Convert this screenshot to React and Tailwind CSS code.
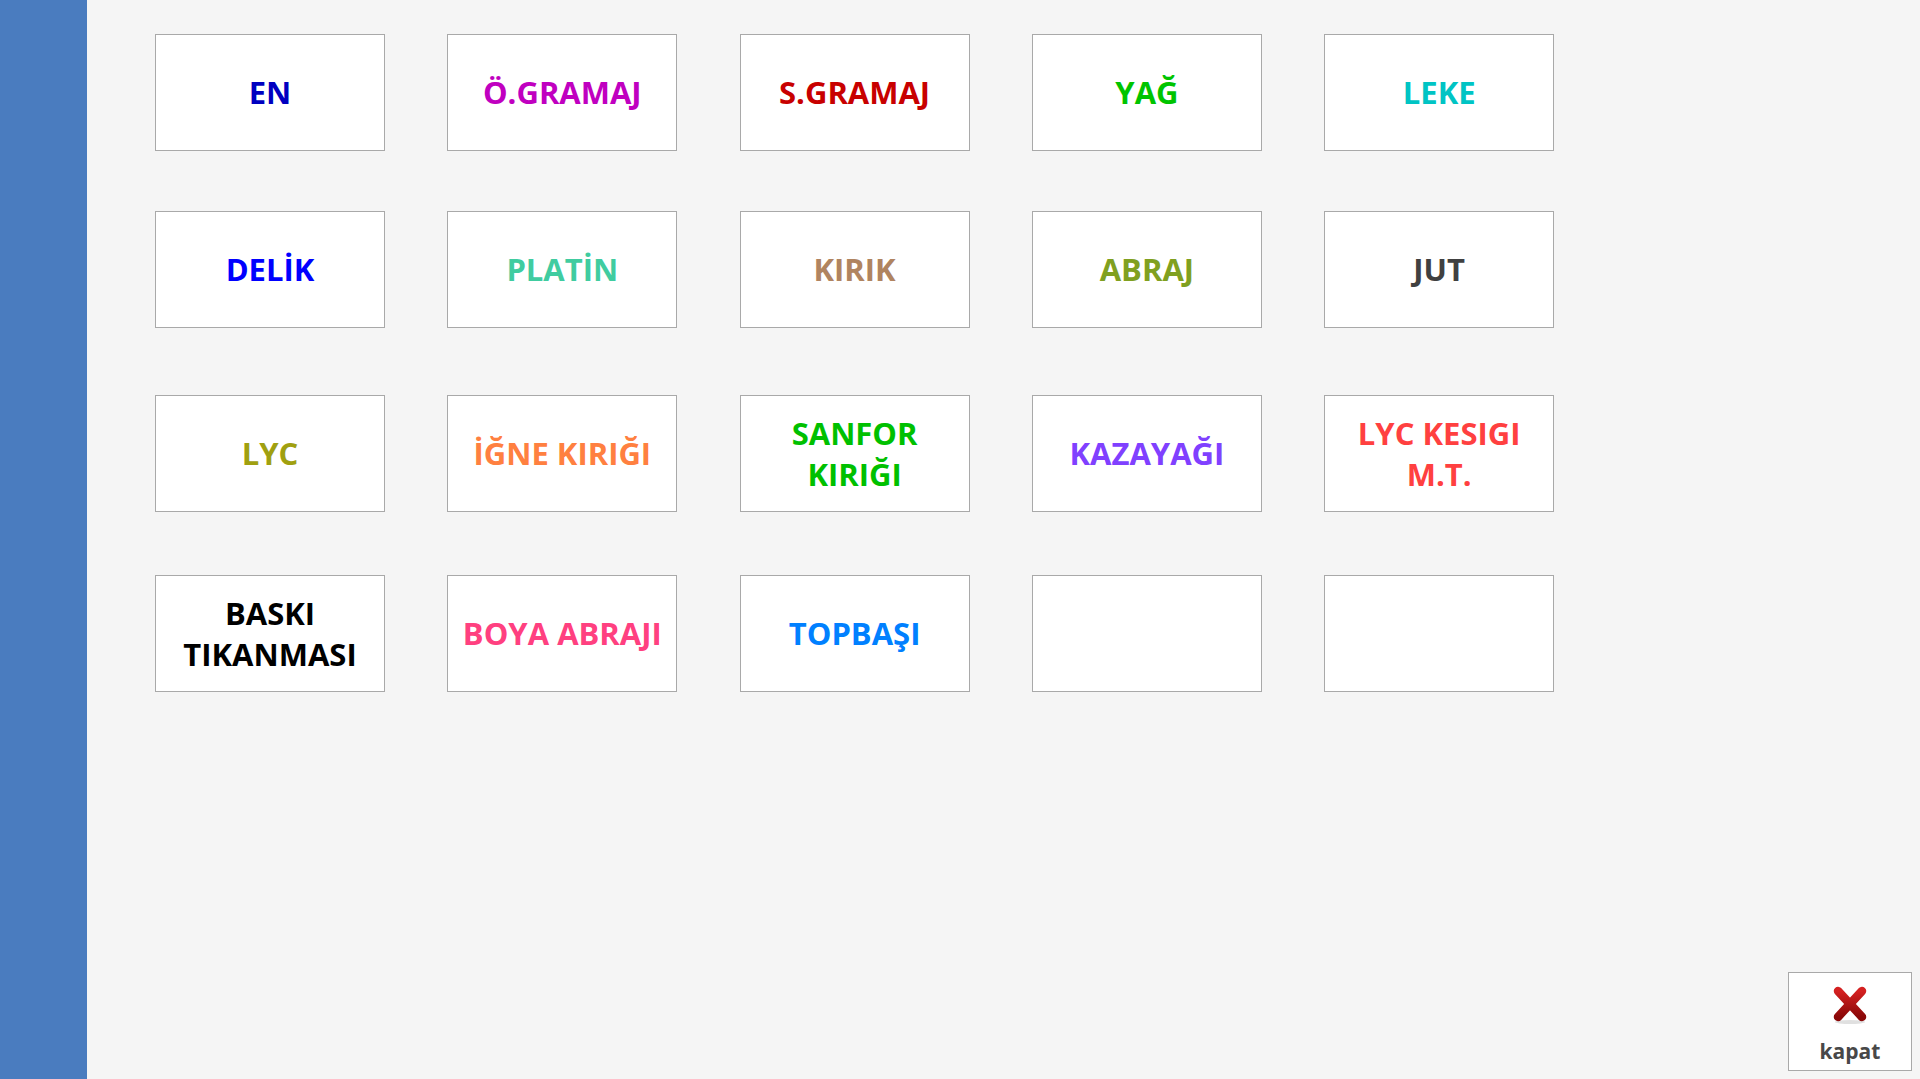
// Defect selection screen (hata butonları)
import React from "react";

const rows = [
  {
    gap: "mt-0",
    items: [
      { lines: ["EN"], color: "text-[#0000c0]" },
      { lines: ["Ö.GRAMAJ"], color: "text-[#c000c0]" },
      { lines: ["S.GRAMAJ"], color: "text-[#c80000]" },
      { lines: ["YAĞ"], color: "text-[#00c400]" },
      { lines: ["LEKE"], color: "text-[#00c4c4]" },
    ],
  },
  {
    gap: "mt-[60px]",
    items: [
      { lines: ["DELİK"], color: "text-[#0000ff]" },
      { lines: ["PLATİN"], color: "text-[#40cca0]" },
      { lines: ["KIRIK"], color: "text-[#b08460]" },
      { lines: ["ABRAJ"], color: "text-[#80a020]" },
      { lines: ["JUT"], color: "text-[#404040]" },
    ],
  },
  {
    gap: "mt-[67px]",
    items: [
      { lines: ["LYC"], color: "text-[#a0a010]" },
      { lines: ["İĞNE KIRIĞI"], color: "text-[#ff8040]" },
      { lines: ["SANFOR", "KIRIĞI"], color: "text-[#00c000]" },
      { lines: ["KAZAYAĞI"], color: "text-[#8040ff]" },
      { lines: ["LYC KESIGI", "M.T."], color: "text-[#ff4040]" },
    ],
  },
  {
    gap: "mt-[63px]",
    items: [
      { lines: ["BASKI", "TIKANMASI"], color: "text-black" },
      { lines: ["BOYA ABRAJI"], color: "text-[#ff4080]" },
      { lines: ["TOPBAŞI"], color: "text-[#0080ff]" },
      { lines: [], color: "" },
      { lines: [], color: "" },
    ],
  },
];

function DefectButton({ lines, color }) {
  return (
    <button
      className={`w-[230px] h-[117px] bg-white border border-[#a9a9a9] flex flex-col items-center justify-center text-center font-bold text-[31px] leading-[40.5px] ${color}`}
    >
      {lines.map((l) => (
        <span key={l} className="whitespace-nowrap">
          {l}
        </span>
      ))}
    </button>
  );
}

function CloseIcon() {
  return (
    <svg width="40" height="40" viewBox="0 0 40 40">
      <defs>
        <linearGradient id="xg" x1="0" y1="0" x2="0" y2="1">
          <stop offset="0" stopColor="#d42020" />
          <stop offset="1" stopColor="#8a0808" />
        </linearGradient>
      </defs>
      <ellipse cx="20" cy="37" rx="15" ry="2" fill="#000" opacity="0.12" />
      <path
        d="M8 6 L32 32 M32 6 L8 32"
        stroke="url(#xg)"
        strokeWidth="8.5"
        strokeLinecap="round"
        fill="none"
      />
    </svg>
  );
}

export default function App() {
  return (
    <div
      className="flex w-full h-screen bg-[#f5f5f5] overflow-hidden"
      style={{ fontFamily: '"Open Sans", "Noto Sans", sans-serif' }}
    >
      <div className="w-[87px] shrink-0 bg-[#4a7cbf]" />

      <div className="flex-1 flex flex-col pl-[68px] pt-[34px]">
        <div className="flex flex-col">
          {rows.map((row, i) => (
            <div key={i} className={`flex gap-x-[62.3px] ${row.gap}`}>
              {row.items.map((it, j) => (
                <DefectButton key={j} lines={it.lines} color={it.color} />
              ))}
            </div>
          ))}
        </div>

        <div className="mt-auto flex justify-end pr-[8px] pb-[8px]">
          <button className="w-[124px] h-[99px] bg-white border border-[#a9a9a9] flex flex-col items-center pt-[12px]">
            <CloseIcon />
            <span className="mt-[16px] text-[21px] leading-none font-bold text-[#484848]">
              kapat
            </span>
          </button>
        </div>
      </div>
    </div>
  );
}
